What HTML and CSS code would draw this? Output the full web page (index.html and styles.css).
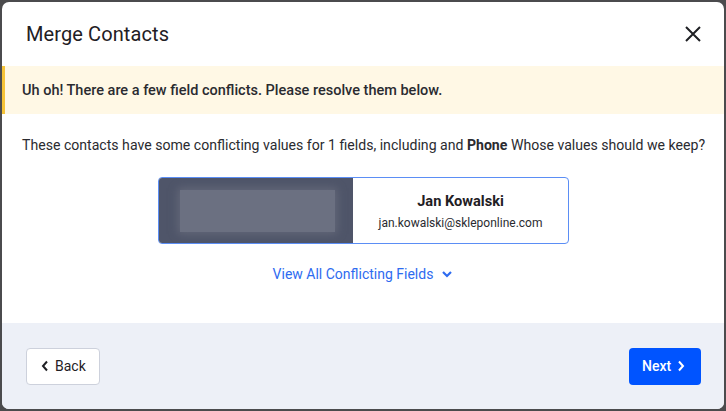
FILE: index.html
```html
<!DOCTYPE html>
<html lang="en">
<head>
    <meta charset="UTF-8">
    <meta name="viewport" content="width=device-width, initial-scale=1.0">
    <title>Merge Contacts</title>
    <link rel="stylesheet" href="styles.css">
</head>
<body>

<div class="modal">
    <div class="modal-header">
        <h1>Merge Contacts</h1>
        <button class="close" aria-label="Close">
            <svg width="18" height="18" viewBox="0 0 18 18">
                <path d="M2 2 L16 16 M16 2 L2 16" stroke="#1f2024" stroke-width="2" fill="none"/>
            </svg>
        </button>
    </div>

    <div class="warning">
        Uh oh! There are a few field conflicts. Please resolve them below.
    </div>

    <div class="modal-body">
        <p class="intro">These contacts have some conflicting values for 1 fields, including and <strong>Phone</strong> Whose values should we keep?</p>

        <div class="contact-card">
            <div class="contact-photo">
                <div class="blur"></div>
            </div>
            <div class="contact-info">
                <div class="name">Jan Kowalski</div>
                <div class="email">jan.kowalski@skleponline.com</div>
            </div>
        </div>

        <a class="view-all" href="#">
            View All Conflicting Fields
            <svg width="12" height="12" viewBox="0 0 12 12">
                <path d="M2 4 L6 8 L10 4" stroke="#2e6bf0" stroke-width="2.2" fill="none"/>
            </svg>
        </a>
    </div>

    <div class="modal-footer">
        <button class="btn btn-back">
            <svg width="8" height="12" viewBox="0 0 8 12">
                <path d="M6 1.5 L2 6 L6 10.5" stroke="#1f2024" stroke-width="2" fill="none"/>
            </svg>
            Back
        </button>
        <button class="btn btn-next">
            Next
            <svg width="8" height="12" viewBox="0 0 8 12">
                <path d="M2 1.5 L6 6 L2 10.5" stroke="#fff" stroke-width="2" fill="none"/>
            </svg>
        </button>
    </div>
</div>

</body>
</html>
```

FILE: styles.css
```css
body {
    font-family: Roboto, 'Liberation Sans', Arial, sans-serif;
    background-color: #4b4b4d;
    margin: 0;
    padding: 2px;
    height: 411px;
    box-sizing: border-box;
    color: #1f2024;
}

.modal {
    background-color: #fff;
    border-radius: 7px;
    height: 407px;
    display: flex;
    flex-direction: column;
    overflow: hidden;
}

.modal-header {
    height: 64px;
    display: flex;
    align-items: center;
    justify-content: space-between;
    padding: 0 22px 0 24px;
    box-sizing: border-box;
}

h1 {
    margin: 0;
    font-size: 20px;
    font-weight: 400;
    letter-spacing: 0.1px;
}

.close {
    background: none;
    border: none;
    padding: 0;
    display: flex;
    cursor: pointer;
}

.warning {
    background-color: #fff8e5;
    border-left: 3px solid #f5c338;
    height: 48px;
    display: flex;
    align-items: center;
    padding-left: 17px;
    font-size: 14.5px;
    font-weight: 500;
    color: #2a2b30;
}

.modal-body {
    flex: 1;
    display: flex;
    flex-direction: column;
    align-items: center;
    padding-top: 23px;
}

.intro {
    margin: 0;
    font-size: 14.1px;
    color: #2a2b30;
    align-self: stretch;
    padding-left: 20px;
    white-space: nowrap;
}

.intro strong {
    font-weight: 700;
}

.contact-card {
    margin-top: 24px;
    margin-left: 1px;
    width: 411px;
    height: 67px;
    box-sizing: border-box;
    border: 1px solid #5b8ef5;
    border-radius: 4px;
    display: flex;
    overflow: hidden;
}

.contact-photo {
    width: 194px;
    background-color: #4f5569;
    display: flex;
    align-items: center;
    padding-left: 21px;
    box-sizing: border-box;
}

.blur {
    width: 155px;
    height: 42px;
    background-color: #6b7081;
    box-shadow: 0 0 8px 2px #636879;
}

.contact-info {
    flex: 1;
    display: flex;
    flex-direction: column;
    align-items: center;
    justify-content: center;
    gap: 6px;
}

.name {
    font-size: 14.6px;
    font-weight: 700;
}

.email {
    font-size: 12px;
    color: #2a2b30;
}

.view-all {
    margin-top: 22px;
    color: #2e6bf0;
    text-decoration: none;
    font-size: 14px;
    display: flex;
    align-items: center;
    gap: 8px;
}

.modal-footer {
    height: 86px;
    background-color: #edf0f7;
    display: flex;
    align-items: center;
    justify-content: space-between;
    padding: 0 23px 0 24px;
}

.btn {
    height: 37px;
    border-radius: 4px;
    font-family: inherit;
    font-size: 14px;
    display: flex;
    align-items: center;
    gap: 6px;
    cursor: pointer;
}

.btn-back {
    background-color: #fff;
    border: 1px solid #cdd1dc;
    color: #1f2024;
    padding: 0 12px 0 14px;
    width: 74px;
}

.btn-next {
    background-color: #0054ff;
    border: none;
    color: #fff;
    font-weight: 500;
    padding: 0 13px;
    width: 72px;
}
```
